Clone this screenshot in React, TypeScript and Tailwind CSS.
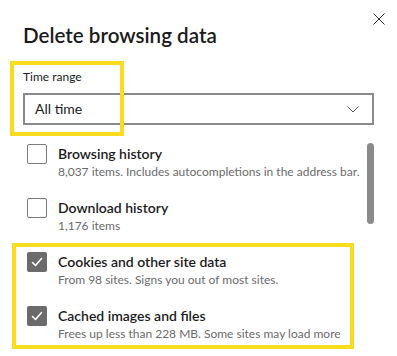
import React from "react";

const rows = [
  { label: "Browsing history", sub: "8,037 items. Includes autocompletions in the address bar.", checked: false },
  { label: "Download history", sub: "1,176 items", checked: false },
  { label: "Cookies and other site data", sub: "From 98 sites. Signs you out of most sites.", checked: true },
  { label: "Cached images and files", sub: "Frees up less than 228 MB. Some sites may load more", checked: true },
];

function Check({ checked }: { checked: boolean }) {
  if (checked) {
    return (
      <div className="w-5 h-5 shrink-0 rounded-[2px] bg-[#6b6b6b] flex items-center justify-center">
        <svg width="14" height="14" viewBox="0 0 14 14" fill="none">
          <path d="M2.5 7.5 L5.5 10.5 L11.5 3.5" stroke="white" strokeWidth="1.6" strokeLinecap="round" strokeLinejoin="round" />
        </svg>
      </div>
    );
  }
  return <div className="w-5 h-5 shrink-0 rounded-[2px] border border-[#7a7a7a] bg-white" />;
}

export default function App() {
  return (
    <div
      className="relative w-[397px] h-[356px] overflow-hidden bg-white text-[#1b1b1b]"
      style={{ fontFamily: 'Lato, "Noto Sans", sans-serif' }}
    >
      <div className="flex flex-col pl-[23px] pr-[23px]">
        <div className="flex items-start justify-between pt-[13px]">
          <h1 className="mt-[8px] text-[20.6px] leading-[28px] font-semibold text-[#1b1b1b]">Delete browsing data</h1>
          <button className="mr-[-11px] w-3 h-3 flex items-center justify-center">
            <svg width="12" height="12" viewBox="0 0 12 12" fill="none">
              <path d="M0.5 0.5 L11.5 11.5 M11.5 0.5 L0.5 11.5" stroke="#333" strokeWidth="1" />
            </svg>
          </button>
        </div>
        <div className="mt-[20px] text-[12px] leading-[16px] text-[#1b1b1b]">Time range</div>
        <div className="mt-[8px] h-[32px] border-2 border-[#8a8a8a] flex items-center justify-between pl-[10px] pr-[13px]">
          <span className="text-[14px] leading-[20px] text-[#1b1b1b]">All time</span>
          <svg width="12" height="7" viewBox="0 0 12 7" fill="none">
            <path d="M0.5 0.5 L6 6 L11.5 0.5" stroke="#555" strokeWidth="1" />
          </svg>
        </div>
        <div className="mt-[19px] flex">
          <div className="flex-1 flex flex-col gap-[18px] pl-[4px]">
            {rows.map((r) => (
              <div key={r.label} className="flex gap-[11px]">
                <Check checked={r.checked} />
                <div className="flex flex-col">
                  <div className="text-[14px] leading-[20px] font-semibold text-[#1b1b1b] whitespace-nowrap">{r.label}</div>
                  <div className="text-[12px] leading-[16px] text-[#6b6b6b] whitespace-nowrap">{r.sub}</div>
                </div>
              </div>
            ))}
          </div>
          <div className="w-[7px] h-[81px] shrink-0 rounded-full bg-[#8a8a8a] mt-[-1px]" />
        </div>
      </div>
      <div className="absolute left-[10px] top-[61px] w-[114px] h-[75px] border-[4px] border-[#fadc1e]" />
      <div className="absolute left-[12px] top-[243px] w-[342px] h-[106px] border-[4px] border-[#fadc1e]" />
    </div>
  );
}
